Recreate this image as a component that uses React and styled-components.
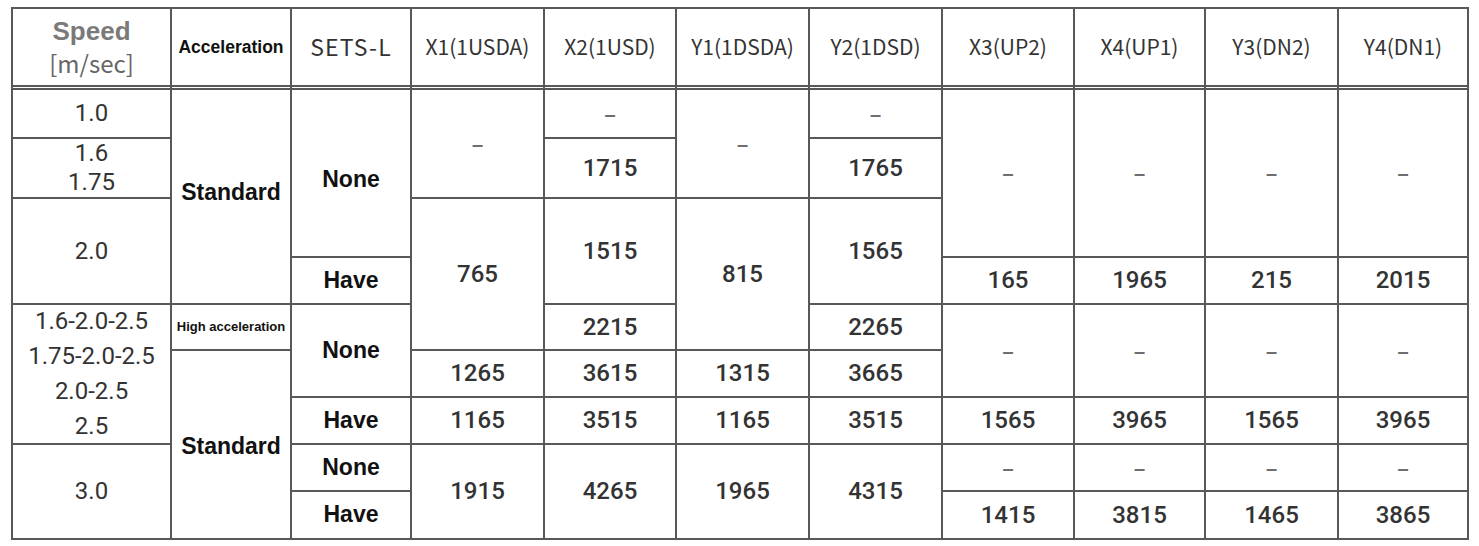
import React from "react";
import styled, { createGlobalStyle } from "styled-components";

const GlobalStyle = createGlobalStyle`
  html, body {
    margin: 0;
    background: #fff;
  }
  body {
    font-family: "Liberation Sans", Arial, sans-serif;
  }
`;

// column / row sizes measured from the printed table (line = 2px gap)
const COLS = [157, 118, 118, 131, 130, 131, 131, 130, 129, 131, 128];
const ROWS = [79, 47, 58, 57, 45, 44, 45, 45, 45, 46];

const Table = styled.div`
  display: grid;
  grid-template-columns: ${COLS.map((w) => `${w}px`).join(" ")};
  grid-template-rows: ${ROWS.map((h) => `${h}px`).join(" ")};
  gap: 2px;
  padding: 2px;
  width: max-content;
  margin: 7px 0 0 11px;
  background: #585858;
`;

const Cell = styled.div`
  grid-column: ${(p) => p.$col} / span ${(p) => p.$cs || 1};
  grid-row: ${(p) => p.$row} / span ${(p) => p.$rs || 1};
  background: #fff;
  display: flex;
  flex-direction: column;
  align-items: center;
  justify-content: center;
  text-align: center;
  box-sizing: border-box;
  padding-top: ${(p) => Math.max(0, (p.$nudge || 0) * 2)}px;
  padding-bottom: ${(p) => Math.max(0, -(p.$nudge || 0) * 2)}px;
`;

// header cells sit over a double rule
const HeadCell = styled(Cell)`
  box-shadow: inset 0 -1px 0 #fff, inset 0 -3px 0 #585858;
  padding-bottom: 3px;
`;

const Gothic = styled.span`
  font-family: "Noto Sans CJK JP", "Liberation Sans", sans-serif;
  font-size: ${(p) => p.$size || 21}px;
  font-weight: 400;
  color: ${(p) => p.$color || "#333"};
  letter-spacing: ${(p) => p.$ls || 0}px;
  line-height: ${(p) => p.$lh || 1.2};
  white-space: nowrap;
`;

const Num = styled.span`
  display: block;
  font-family: Roboto, "Liberation Sans", Arial, sans-serif;
  font-size: 24px;
  font-weight: ${(p) => (p.$light ? 400 : 500)};
  color: #333;
  line-height: ${(p) => p.$lh || 1.2};
  white-space: nowrap;
`;

const Label = styled.span`
  font-family: "Liberation Sans", Arial, sans-serif;
  font-weight: 700;
  font-size: ${(p) => p.$size || 23}px;
  color: ${(p) => p.$color || "#111"};
  line-height: ${(p) => p.$lh || 1.2};
  white-space: nowrap;
`;

const Dash = styled.span`
  font-family: "Liberation Sans", Arial, sans-serif;
  font-size: 20px;
  font-weight: 700;
  color: #6e6e6e;
  line-height: 1;
`;

const heads = [
  "X1(1USDA)",
  "X2(1USD)",
  "Y1(1DSDA)",
  "Y2(1DSD)",
  "X3(UP2)",
  "X4(UP1)",
  "Y3(DN2)",
  "Y4(DN1)",
];

// [col, row, rowSpan, value]  value null => dash
const values = [
  [4, 2, 2, null], [4, 4, 3, "765"], [4, 7, 1, "1265"], [4, 8, 1, "1165"], [4, 9, 2, "1915"],
  [5, 2, 1, null], [5, 3, 1, "1715"], [5, 4, 2, "1515"], [5, 6, 1, "2215"], [5, 7, 1, "3615"], [5, 8, 1, "3515"], [5, 9, 2, "4265"],
  [6, 2, 2, null], [6, 4, 3, "815"], [6, 7, 1, "1315"], [6, 8, 1, "1165"], [6, 9, 2, "1965"],
  [7, 2, 1, null], [7, 3, 1, "1765"], [7, 4, 2, "1565"], [7, 6, 1, "2265"], [7, 7, 1, "3665"], [7, 8, 1, "3515"], [7, 9, 2, "4315"],
];

const lifts = [
  ["165", "1565", "1415"],
  ["1965", "3965", "3815"],
  ["215", "1565", "1465"],
  ["2015", "3965", "3865"],
];

lifts.forEach(([a, b, c], i) => {
  const col = 8 + i;
  values.push(
    [col, 2, 3, null],
    [col, 5, 1, a],
    [col, 6, 2, null],
    [col, 8, 1, b],
    [col, 9, 1, null],
    [col, 10, 1, c]
  );
});

const sets = [
  [2, 3, "None", 7],
  [5, 1, "Have", 0],
  [6, 2, "None", 0],
  [8, 1, "Have", 0],
  [9, 1, "None", 0],
  [10, 1, "Have", 0],
];

export default function App() {
  return (
    <>
      <GlobalStyle />
      <Table>
        <HeadCell $col={1} $row={1}>
          <Label $size={26} $color="#7a7a7a" $lh="31px">Speed</Label>
          <Gothic $size={24} $color="#666" $lh="31px">[m/sec]</Gothic>
        </HeadCell>
        <HeadCell $col={2} $row={1}>
          <Label $size={17.5}>Acceleration</Label>
        </HeadCell>
        <HeadCell $col={3} $row={1}>
          <Gothic $size={23} $ls={1.2}>SETS-L</Gothic>
        </HeadCell>
        {heads.map((h, i) => (
          <HeadCell key={h} $col={4 + i} $row={1}>
            <Gothic>{h}</Gothic>
          </HeadCell>
        ))}

        <Cell $col={1} $row={2}>
          <Num $light>1.0</Num>
        </Cell>
        <Cell $col={1} $row={3}>
          <Num $light $lh="29px">1.6</Num>
          <Num $light $lh="29px">1.75</Num>
        </Cell>
        <Cell $col={1} $row={4} $rs={2}>
          <Num $light>2.0</Num>
        </Cell>
        <Cell $col={1} $row={6} $rs={3}>
          {["1.6-2.0-2.5", "1.75-2.0-2.5", "2.0-2.5", "2.5"].map((s) => (
            <Num key={s} $light $lh="35px">{s}</Num>
          ))}
        </Cell>
        <Cell $col={1} $row={9} $rs={2}>
          <Num $light>3.0</Num>
        </Cell>

        <Cell $col={2} $row={2} $rs={4} $nudge={-4}>
          <Label>Standard</Label>
        </Cell>
        <Cell $col={2} $row={6}>
          <Label $size={13}>High acceleration</Label>
        </Cell>
        <Cell $col={2} $row={7} $rs={4} $nudge={2}>
          <Label>Standard</Label>
        </Cell>

        {sets.map(([row, rs, text, nudge]) => (
          <Cell key={row} $col={3} $row={row} $rs={rs} $nudge={nudge}>
            <Label>{text}</Label>
          </Cell>
        ))}

        {values.map(([col, row, rs, v]) => (
          <Cell key={`${col}-${row}`} $col={col} $row={row} $rs={rs}>
            {v ? <Num>{v}</Num> : <Dash>–</Dash>}
          </Cell>
        ))}
      </Table>
    </>
  );
}
